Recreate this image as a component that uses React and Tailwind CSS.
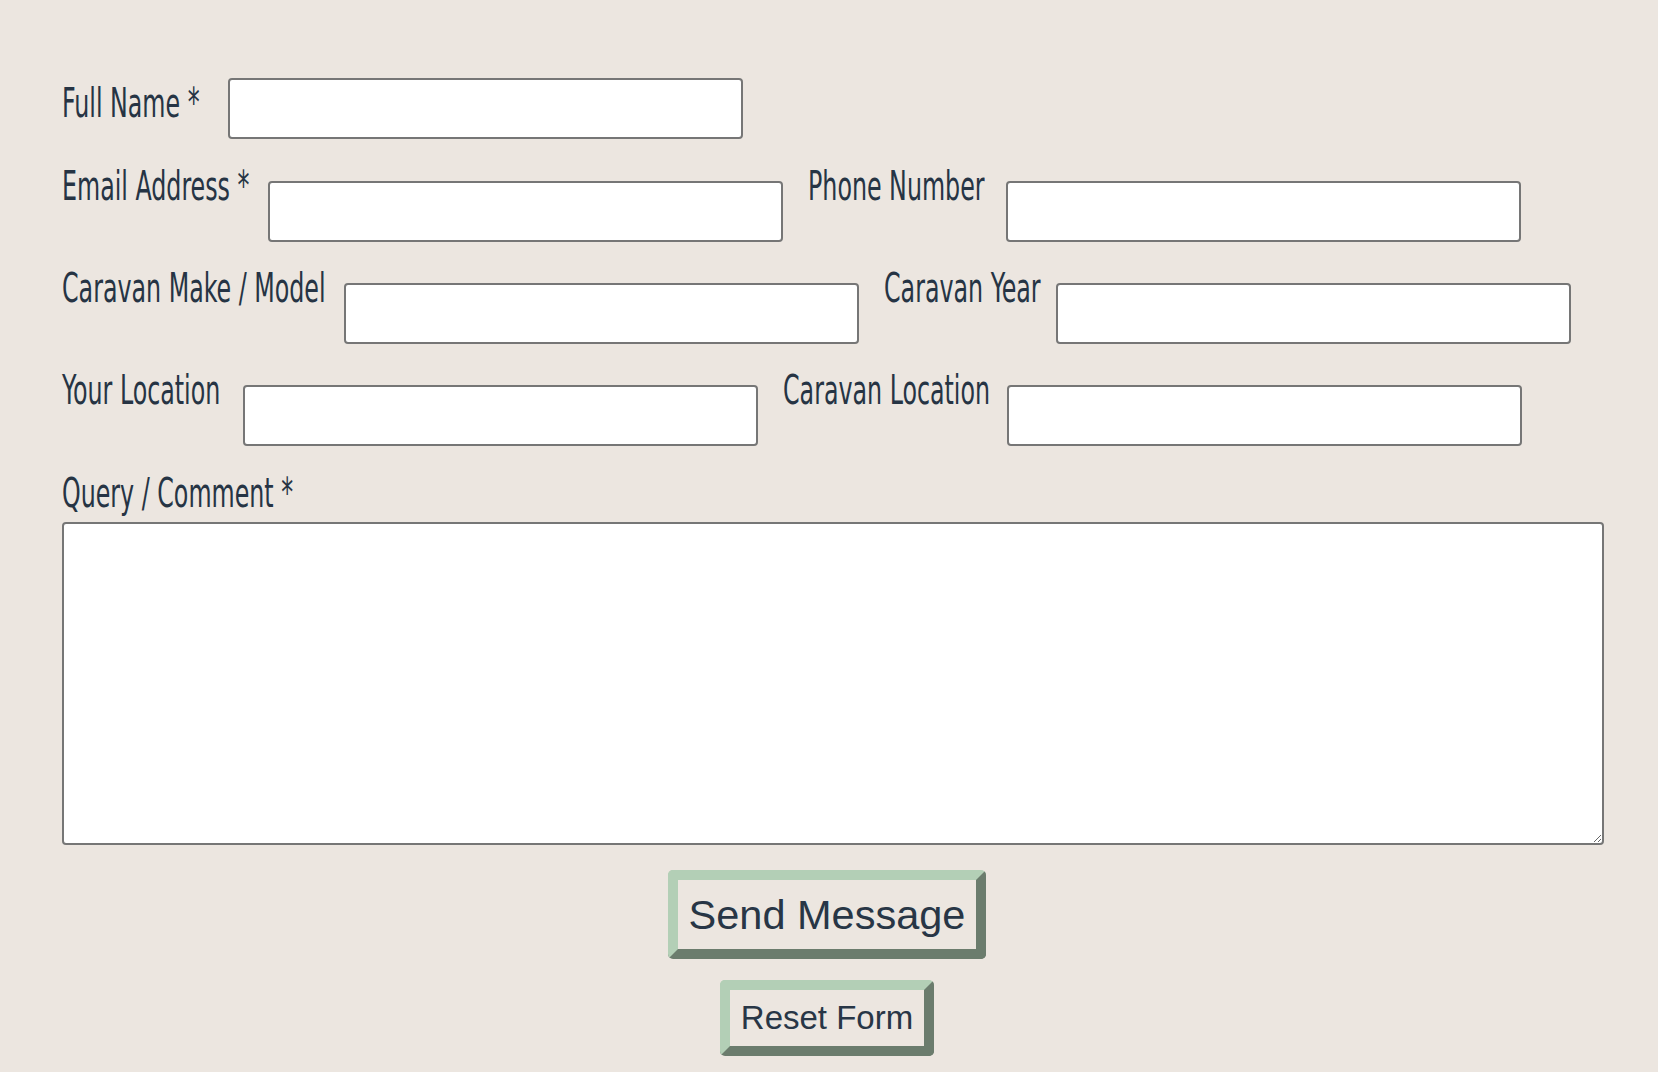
import React from 'react';

const Label = ({ text, className = '' }) => (
    <label className={`block shrink-0 whitespace-nowrap text-[40px] leading-[40px] text-[#263444] font-['Liberation_Sans_Narrow','DejaVu_Sans_Condensed',sans-serif] ${className}`}>
        <span className="inline-block origin-left scale-x-[0.66]">{text}</span>
    </label>
);

const Field = ({ className = '' }) => (
    <input
        type="text"
        className={`block shrink-0 w-[515px] h-[61px] bg-white border-2 border-[#767676] rounded-[4px] ${className}`}
    />
);

export default function App() {
    return (
        <div className="min-h-screen bg-[#ece6e0] pt-[78px] pb-[20px]">
            <form className="ml-[62px] w-[1530px]" onSubmit={(e) => e.preventDefault()}>
                <div className="flex items-start">
                    <Label text="Full Name *" className="w-[166px] mt-[5px]" />
                    <Field />
                </div>

                <div className="flex items-start mt-[27px]">
                    <Label text="Email Address *" className="w-[206px]" />
                    <Field className="mt-[15px]" />
                    <Label text="Phone Number" className="w-[198px] ml-[25px]" />
                    <Field className="mt-[15px]" />
                </div>

                <div className="flex items-start mt-[26px]">
                    <Label text="Caravan Make / Model" className="w-[282px]" />
                    <Field className="mt-[15px]" />
                    <Label text="Caravan Year" className="w-[172px] ml-[25px]" />
                    <Field className="mt-[15px]" />
                </div>

                <div className="flex items-start mt-[26px]">
                    <Label text="Your Location" className="w-[181px]" />
                    <Field className="mt-[15px]" />
                    <Label text="Caravan Location" className="w-[224px] ml-[25px]" />
                    <Field className="mt-[15px]" />
                </div>

                <Label text="Query / Comment *" className="mt-[27px]" />
                <textarea className="block mt-[9px] w-[1542px] h-[323px] bg-white border-2 border-[#767676] rounded-[4px]" />

                <div className="flex flex-col items-center font-['Liberation_Sans',Arial,sans-serif] text-[#283646]">
                    <button
                        type="submit"
                        className="mt-[25px] px-[11px] py-[10px] text-[41.5px] leading-[49px] bg-[#ece6e0] rounded-[5px] border-[10px] border-t-[#b3cfb6] border-l-[#b3cfb6] border-r-[#6b7c6d] border-b-[#6b7c6d]"
                    >
                        Send Message
                    </button>
                    <button
                        type="reset"
                        className="mt-[21px] px-[11px] py-[9px] text-[33px] leading-[38px] bg-[#ece6e0] rounded-[5px] border-[10px] border-t-[#b3cfb6] border-l-[#b3cfb6] border-r-[#6b7c6d] border-b-[#6b7c6d]"
                    >
                        Reset Form
                    </button>
                </div>
            </form>
        </div>
    );
}
